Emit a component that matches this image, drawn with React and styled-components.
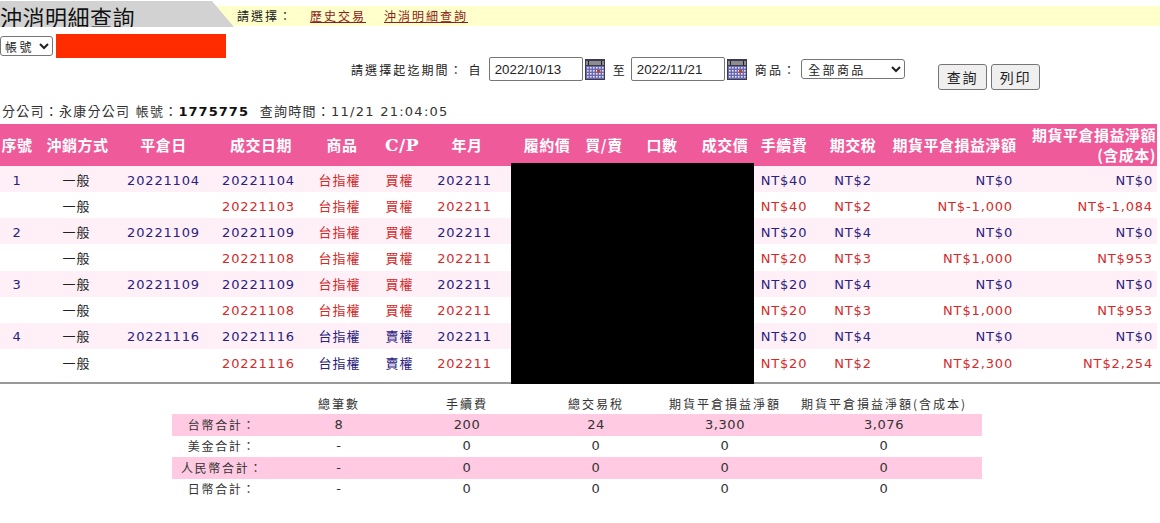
import styled, { createGlobalStyle } from "styled-components";

const Global = createGlobalStyle`
  html, body {
    margin: 0;
    padding: 0;
    background: #fff;
    font-family: "DejaVu Sans", "Noto Sans CJK TC", sans-serif;
    font-size: 13px;
    color: #222;
  }
`;

const TitleBar = styled.div`
  display: flex;
  height: 27px;
  margin-top: 1px;
  background: linear-gradient(#ffffcc, #ffffcc) 0 5px / 100% 20px no-repeat;
`;

const TitleTab = styled.h1`
  margin: 0;
  width: 235px;
  height: 26px;
  background: #d2d2d2;
  clip-path: polygon(0 0, 212px 0, 234px 100%, 0 100%);
  font: 400 22px/31px "Noto Sans CJK TC", sans-serif;
  letter-spacing: 0.5px;
  color: #111;
  white-space: nowrap;
`;

const TitleNav = styled.nav`
  display: flex;
  align-items: center;
  height: 29px;
  font: 400 12px/1 "Noto Sans CJK TC", sans-serif;
  letter-spacing: 2px;
  padding-left: 2px;
`;

const NavLabel = styled.span`
  width: 73px;
  color: #222;
`;

const NavLink = styled.a`
  color: #8b2020;
  text-decoration: underline;
  margin-right: 18px;
`;

const AccountRow = styled.div`
  display: flex;
  align-items: center;
  height: 24px;
  margin-top: 6px;
`;

const BaseSelect = styled.select`
  font: 400 12px "Noto Sans CJK TC", sans-serif;
  letter-spacing: 2.4px;
  background: #fff;
  border: 1px solid #767676;
  border-radius: 3px;
  color: #222;
  padding: 0;
`;

const AccountSelect = styled(BaseSelect)`
  width: 53px;
  height: 20px;
  margin-left: 0;
`;

const RedactedName = styled.div`
  width: 170px;
  height: 24px;
  margin-left: 3px;
  background: #ff2c00;
`;

const FilterRow = styled.form`
  display: flex;
  align-items: flex-start;
  height: 42px;
  padding-left: 351px;
  margin-top: -1px;
  font: 400 12px/25px "Noto Sans CJK TC", sans-serif;
  letter-spacing: 2.1px;
`;

const FilterText = styled.span`
  white-space: nowrap;
  margin: 0 ${(p) => p.$right || 0}px 0 ${(p) => p.$left || 0}px;
`;

const DateInput = styled.input`
  box-sizing: border-box;
  width: 94px;
  height: 24px;
  padding: 0 5px;
  border: 1px solid #767676;
  border-radius: 2px;
  font: 400 13.3px "Liberation Sans", sans-serif;
  color: #222;
  letter-spacing: 0;
`;

const CalendarIcon = styled.svg`
  display: block;
  width: 20px;
  height: 21px;
  margin: 2px 0 0 2px;
  flex: none;
`;

const ProductSelect = styled(BaseSelect)`
  width: 104px;
  height: 20px;
  margin: 2px 0 0 0;
  padding-left: 2px;
`;

const Button = styled.button`
  box-sizing: border-box;
  width: 49px;
  height: 26px;
  margin: 7px 4px 0 0;
  padding: 0;
  background: #efefef;
  border: 1px solid #767676;
  border-radius: 3px;
  color: #222;
  font: 400 14px "Noto Sans CJK TC", sans-serif;
  letter-spacing: 2px;
`;

const Buttons = styled.div`
  display: flex;
  margin-left: 33px;
`;

const InfoLine = styled.div`
  height: 20px;
  margin-top: 3px;
  padding-left: 2px;
  font-size: 13px;
  line-height: 20px;
  letter-spacing: 1.25px;
  color: #333;
  white-space: nowrap;

  b {
    color: #111;
    letter-spacing: 1.05px;
  }
`;

const TradeSection = styled.section`
  position: relative;
  margin-top: 2px;
`;

const Redaction = styled.div`
  position: absolute;
  left: 511px;
  top: 39px;
  width: 243px;
  height: 221px;
  background: #000;
`;

const TradeTable = styled.table`
  width: 1157px;
  table-layout: fixed;
  border-collapse: collapse;
`;

const HeadCell = styled.th`
  height: 42px;
  padding: 0 ${(p) => (p.$wrap ? 1 : 0)}px 0 ${(p) => p.$shift || 0}px;
  background: #ee5a9a;
  color: #fff;
  font: 700 15px/20px "Noto Sans CJK TC", sans-serif;
  letter-spacing: 0.5px;
  text-align: ${(p) => (p.$wrap ? "right" : "center")};
  white-space: nowrap;
`;

const SerifHead = styled(HeadCell)`
  font: 700 17px/20px "DejaVu Serif", serif;
`;

const Row = styled.tr`
  height: 26.15px;
  background: ${(p) => (p.$tint ? "#fff0f7" : "#fff")};
`;

const Cell = styled.td`
  padding: 3px ${(p) => (p.$right ? 4 : p.$pad || 0)}px 0 0;
  font-size: 13px;
  letter-spacing: 0.85px;
  line-height: 18px;
  text-align: ${(p) => (p.$right ? "right" : "center")};
  color: ${(p) => (p.$plain ? "#222" : p.$sell ? "#d42a2a" : "#2a2080")};
  white-space: nowrap;
`;

const HanCell = styled(Cell)`
  padding-top: 1px;
  font-family: "Noto Sans CJK TC", sans-serif;
  letter-spacing: 1px;
`;

const Rule = styled.hr`
  margin: 0;
  height: 2px;
  border: 0;
  background: #999;
`;

const TradeGap = styled.div`
  height: 7px;
`;

const SummaryTable = styled.table`
  width: 810px;
  margin-left: 172px;
  table-layout: fixed;
  border-collapse: collapse;
`;

const SummaryHead = styled.th`
  height: 20px;
  padding: 10px 0 0;
  font: 400 12px/1 "Noto Sans CJK TC", sans-serif;
  letter-spacing: 2px;
  color: #333;
  white-space: nowrap;
`;

const SummaryRow = styled.tr`
  height: 21.5px;
  background: ${(p) => (p.$tint ? "#ffcae2" : "#fff")};
`;

const SummaryCell = styled.td`
  padding: 0;
  text-align: center;
  font-size: 13px;
  letter-spacing: 0.6px;
  color: #333;
  line-height: 16px;
`;

const SummaryLabel = styled(SummaryCell)`
  font: 400 12px/16px "Noto Sans CJK TC", sans-serif;
  letter-spacing: 1.7px;
  white-space: nowrap;
`;

function Calendar() {
  const cols = [3, 6, 9, 12, 15, 18];
  const rows = [9, 12, 15, 18];
  return (
    <CalendarIcon viewBox="0 0 20 21" aria-hidden="true">
      <rect x="0" y="0" width="20" height="21" fill="#3a3a52" />
      <rect x="1" y="2" width="18" height="4" fill="#8d8d8d" />
      <rect x="3" y="2" width="1" height="4" fill="#222" />
      <rect x="16" y="2" width="1" height="4" fill="#222" />
      <rect x="1" y="7" width="18" height="13" fill="#6a68b0" />
      {rows.map((y) =>
        cols.map((x) => (
          <rect key={`${x}-${y}`} x={x - 1} y={y - 1} width="1.6" height="1.6" fill="#e4e4f2" />
        ))
      )}
      <rect x="12" y="11" width="3" height="3" fill="#c8402a" />
    </CalendarIcon>
  );
}

const columns = [34, 87, 85, 110, 52, 68, 62, 82, 48, 68, 58, 60, 78, 125, 140];

const trades = [
  { no: "1", close: "20221104", date: "20221104", item: "台指權", cp: "買權", fee: "NT$40", tax: "NT$2", pnl: "NT$0", net: "NT$0" },
  { date: "20221103", item: "台指權", cp: "買權", fee: "NT$40", tax: "NT$2", pnl: "NT$-1,000", net: "NT$-1,084" },
  { no: "2", close: "20221109", date: "20221109", item: "台指權", cp: "買權", fee: "NT$20", tax: "NT$4", pnl: "NT$0", net: "NT$0" },
  { date: "20221108", item: "台指權", cp: "買權", fee: "NT$20", tax: "NT$3", pnl: "NT$1,000", net: "NT$953" },
  { no: "3", close: "20221109", date: "20221109", item: "台指權", cp: "買權", fee: "NT$20", tax: "NT$4", pnl: "NT$0", net: "NT$0" },
  { date: "20221108", item: "台指權", cp: "買權", fee: "NT$20", tax: "NT$3", pnl: "NT$1,000", net: "NT$953" },
  { no: "4", close: "20221116", date: "20221116", item: "台指權", cp: "賣權", fee: "NT$20", tax: "NT$4", pnl: "NT$0", net: "NT$0", blueItem: true },
  { date: "20221116", item: "台指權", cp: "賣權", fee: "NT$20", tax: "NT$2", pnl: "NT$2,300", net: "NT$2,254", blueItem: true },
];

const summaryColumns = [100, 134, 122, 136, 122, 196];

const summary = [
  ["台幣合計：", "8", "200", "24", "3,300", "3,076"],
  ["美金合計：", "-", "0", "0", "0", "0"],
  ["人民幣合計：", "-", "0", "0", "0", "0"],
  ["日幣合計：", "-", "0", "0", "0", "0"],
];

export default function App() {
  return (
    <>
      <Global />
      <TitleBar>
        <TitleTab>沖消明細查詢</TitleTab>
        <TitleNav>
          <NavLabel>請選擇：</NavLabel>
          <NavLink href="#">歷史交易</NavLink>
          <NavLink href="#">沖消明細查詢</NavLink>
        </TitleNav>
      </TitleBar>

      <AccountRow>
        <AccountSelect defaultValue="account">
          <option value="account">帳號</option>
        </AccountSelect>
        <RedactedName />
      </AccountRow>

      <FilterRow>
        <FilterText $right={6}>請選擇起迄期間： 自</FilterText>
        <DateInput defaultValue="2022/10/13" />
        <Calendar />
        <FilterText $left={8} $right={4}>至</FilterText>
        <DateInput defaultValue="2022/11/21" />
        <Calendar />
        <FilterText $left={8} $right={4}>商品：</FilterText>
        <ProductSelect defaultValue="all">
          <option value="all">全部商品</option>
        </ProductSelect>
        <Buttons>
          <Button type="button">查詢</Button>
          <Button type="button">列印</Button>
        </Buttons>
      </FilterRow>

      <InfoLine>
        分公司：永康分公司 帳號：<b>1775775</b>&nbsp; 查詢時間：11/21 21:04:05
      </InfoLine>

      <TradeSection>
        <TradeTable>
          <colgroup>
            {columns.map((w, i) => (
              <col key={i} style={{ width: w }} />
            ))}
          </colgroup>
          <thead>
            <tr>
              <HeadCell>序號</HeadCell>
              <HeadCell>沖銷方式</HeadCell>
              <HeadCell>平倉日</HeadCell>
              <HeadCell>成交日期</HeadCell>
              <HeadCell>商品</HeadCell>
              <SerifHead>C/P</SerifHead>
              <HeadCell>年月</HeadCell>
              <HeadCell $shift={16}>履約價</HeadCell>
              <HeadCell>買/賣</HeadCell>
              <HeadCell>口數</HeadCell>
              <HeadCell>成交價</HeadCell>
              <HeadCell>手續費</HeadCell>
              <HeadCell>期交稅</HeadCell>
              <HeadCell>期貨平倉損益淨額</HeadCell>
              <HeadCell $wrap>
                期貨平倉損益淨額
                <br />
                (含成本)
              </HeadCell>
            </tr>
          </thead>
          <tbody>
            {trades.map((t, i) => {
              const sell = i % 2 === 1;
              return (
                <Row key={i} $tint={!sell}>
                  <Cell>{t.no}</Cell>
                  <HanCell $plain $pad={2}>一般</HanCell>
                  <Cell>{t.close}</Cell>
                  <Cell $sell={sell} $pad={5}>{t.date}</Cell>
                  <HanCell $sell={!t.blueItem} $pad={5}>{t.item}</HanCell>
                  <HanCell $sell={!t.blueItem} $pad={5}>{t.cp}</HanCell>
                  <Cell $sell={sell} $pad={5}>202211</Cell>
                  <Cell colSpan={4} />
                  <Cell $sell={sell}>{t.fee}</Cell>
                  <Cell $sell={sell}>{t.tax}</Cell>
                  <Cell $right $sell={sell}>{t.pnl}</Cell>
                  <Cell $right $sell={sell}>{t.net}</Cell>
                </Row>
              );
            })}
          </tbody>
        </TradeTable>
        <TradeGap />
        <Rule />
        <Redaction />
      </TradeSection>

      <SummaryTable>
        <colgroup>
          {summaryColumns.map((w, i) => (
            <col key={i} style={{ width: w }} />
          ))}
        </colgroup>
        <thead>
          <tr>
            <SummaryHead />
            <SummaryHead>總筆數</SummaryHead>
            <SummaryHead>手續費</SummaryHead>
            <SummaryHead>總交易稅</SummaryHead>
            <SummaryHead>期貨平倉損益淨額</SummaryHead>
            <SummaryHead>期貨平倉損益淨額(含成本)</SummaryHead>
          </tr>
        </thead>
        <tbody>
          {summary.map((row, i) => (
            <SummaryRow key={row[0]} $tint={i % 2 === 0}>
              <SummaryLabel>{row[0]}</SummaryLabel>
              {row.slice(1).map((v, j) => (
                <SummaryCell key={j}>{v}</SummaryCell>
              ))}
            </SummaryRow>
          ))}
        </tbody>
      </SummaryTable>
    </>
  );
}
